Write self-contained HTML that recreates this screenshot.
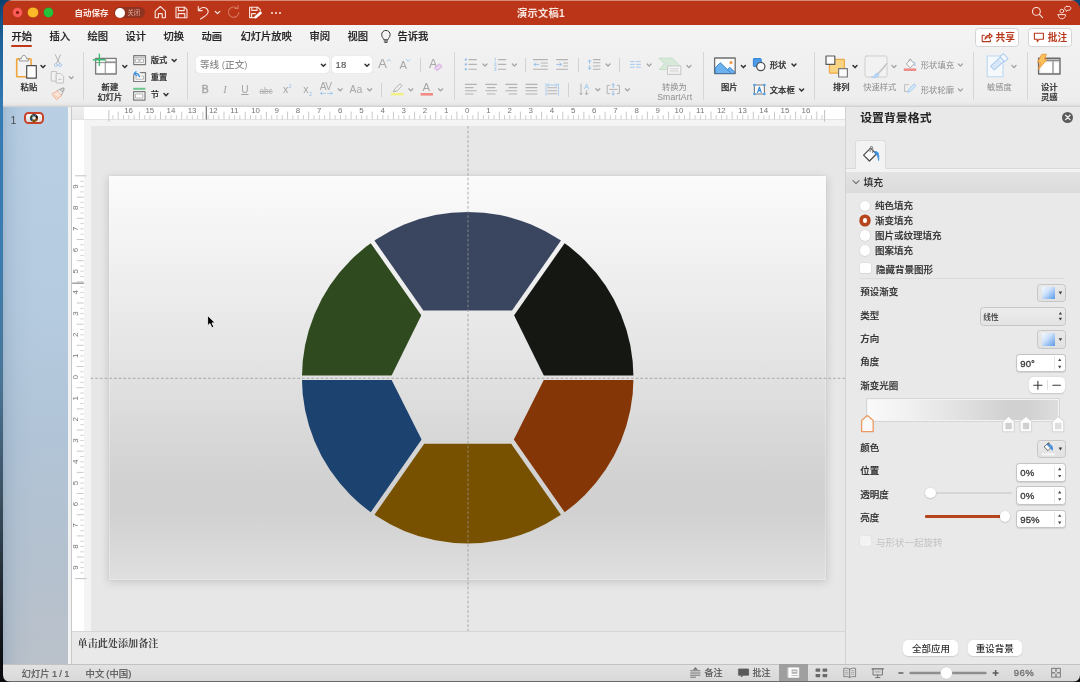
<!DOCTYPE html>
<html lang="zh-CN">
<head>
<meta charset="utf-8">
<title>演示文稿1</title>
<style>
html,body{margin:0;padding:0}
body{width:1080px;height:682px;overflow:hidden;position:relative;background:#05080c;
 font-family:"Liberation Sans","Noto Sans CJK SC",sans-serif;font-size:10px;color:#262626;
 -webkit-font-smoothing:antialiased}
*{box-sizing:border-box}
.a{position:absolute}
.t{position:absolute;white-space:nowrap;line-height:1}
svg{position:absolute;overflow:visible}
#desk{left:0;top:0;width:1080px;height:682px;
 background:linear-gradient(180deg,#0b4170 0px,#1f6299 40px,#347ab3 110px,#3b7cb0 250px,#4a7596 380px,#3b4f60 500px,#1c232b 600px,#05070a 682px)}
#deskr{left:1060px;top:0;width:20px;height:20px;background:#0c4474}
#deskb{left:0;top:660px;width:1080px;height:22px;background:#0a0c0f}
#win{will-change:transform;left:0;top:0;width:1080px;height:682px;clip-path:inset(0px 0px 0px 3px round 9px 9px 7px 7px);background:#e9e9e9}
/* title bar */
#tbar{left:0;top:0;width:1080px;height:25px;background:#bb3519;border-top:1px solid #d98c77}
#tabs{left:0;top:25px;width:1080px;height:81.8px;background:linear-gradient(180deg,#f4f4f4 0,#f1f1f1 24px,#eeeeee 70px,#ececec 77px,#e6e6e6 79.6px,#d3d3d3 81.4px,#d3d3d3 81.8px)}
.tab{font-size:10.3px;font-weight:500;color:#242424;top:32px;margin-left:-.1px;-webkit-text-stroke:.18px #242424}
.w{color:#fff}
.sep{position:absolute;width:1px;background:#d6d6d6;top:52px;height:48px}
.ssep{position:absolute;width:1px;background:#d2d2d2;height:14px}
.rl{font-size:8.3px;font-weight:500;color:#2a2a2a;-webkit-text-stroke:.18px #2a2a2a}
.rd{font-size:8.3px;color:#8d8d8d}
.pl{font-size:9.5px;color:#2e2e2e;font-weight:500;margin-top:.2px;-webkit-text-stroke:.15px #2e2e2e}
.inp{position:absolute;left:1015.6px;width:50px;height:18.6px;border-radius:3.5px;background:#fff;border:1px solid #c4c4c4;box-shadow:0 .5px 1px rgba(0,0,0,.10);margin-top:-.2px}
.inp i{position:absolute;left:37.4px;top:1.5px;width:1px;height:14px;background:#e6e6e6}
.iv{position:absolute;font-size:9.6px;color:#363636;line-height:1;left:1020.3px;margin-top:-.1px;-webkit-text-stroke:.3px #363636}
.gb{position:absolute;left:1036.8px;width:28.8px;height:18.6px;border-radius:3.5px;background:linear-gradient(180deg,#e9e9e9,#e1e1e1);border:1px solid #c6c6c6;margin-top:-.2px}
.rb{position:absolute;left:859.6px;width:10.4px;height:10.4px;border-radius:50%;background:#fff;box-shadow:0 0 0 .6px #d9d9d9,0 .6px 1px rgba(0,0,0,.12)}
.cb{position:absolute;left:860.4px;width:10.2px;height:10.2px;border-radius:2.6px;background:#fff;box-shadow:0 0 0 .6px #dedede,0 .6px 1px rgba(0,0,0,.10)}
</style>
</head>
<body>
<div id="desk" class="a"></div><div id="deskr" class="a"></div><div id="deskb" class="a"></div>
<div id="win" class="a">
<!-- ===== title bar ===== -->
<div id="tbar" class="a"></div>
<div class="a" style="left:12.7px;top:7.9px;width:9.5px;height:9.5px;border-radius:50%;background:#fc5b57;box-shadow:0 0 0 .4px #d94a3f"></div>
<div class="a" style="left:15.9px;top:11.1px;width:3.1px;height:3.1px;border-radius:50%;background:#7a1209"></div>
<div class="a" style="left:28.2px;top:7.9px;width:9.5px;height:9.5px;border-radius:50%;background:#fdb927;box-shadow:0 0 0 .4px #dc9a1c"></div>
<div class="a" style="left:43.7px;top:7.9px;width:9.5px;height:9.5px;border-radius:50%;background:#27c13b;box-shadow:0 0 0 .4px #1ea52f"></div>
<div class="t w" style="left:74.5px;top:9px;font-size:8.5px;font-weight:700;color:#fbe9e4">自动保存</div>
<div class="a" style="left:114px;top:7.3px;width:31px;height:11px;border-radius:6px;background:#8f3321"></div>
<div class="a" style="left:114.6px;top:7.6px;width:10.4px;height:10.4px;border-radius:50%;background:#fff"></div>
<div class="t" style="left:127.4px;top:9.9px;font-size:6.3px;color:#dcae9f">关闭</div>
<svg style="left:153px;top:4px" width="132" height="18" viewBox="153 4 132 18" fill="none" stroke="#fbe6e0" stroke-width="1.1" stroke-linecap="round" stroke-linejoin="round">
 <!-- home -->
 <path d="M155.2 11.2 L160.3 6.5 L165.4 11.2 V17.7 H162.2 V13.6 H158.4 V17.7 H155.2 Z"/>
 <!-- save -->
 <path d="M176 7.2 H184.6 L187 9.6 V17.8 H176 Z"/>
 <path d="M178.4 7.4 V10.6 H184.2 V7.4 M178.2 17.6 V13.6 H184.8 V17.6"/>
 <!-- undo -->
 <path d="M198.6 10.4 C200.6 7.4 205.2 6.2 207.4 9.4 C209 11.8 207.8 14 205.6 15.6 L200.6 19"/>
 <path d="M198.3 6.6 V10.6 H202.2" />
 <!-- chevron -->
 <path d="M215.2 11.4 L217.5 13.6 L219.8 11.4" stroke-width="1.3"/>
 <!-- redo (dim) -->
 <path d="M237.4 8.6 A5.2 5.2 0 1 0 238.8 12.6 M235 8.4 H238 V5.6" stroke="#d9765f"/>
 <!-- save as -->
 <path d="M255 17.6 H249.6 V7.2 H257.6 L260.2 9.6 V11"/>
 <path d="M251.8 7.4 V10.4 H257 V7.4 M251.6 17.4 V13.6 H255.4"/>
 <path d="M255.8 17 L260.4 13" stroke-width="2.7" stroke="#fff"/>
</svg>
<div class="a" style="left:270.8px;top:11.8px;width:2px;height:2px;background:#fbe6e0;border-radius:50%"></div>
<div class="a" style="left:274.9px;top:11.8px;width:2px;height:2px;background:#fbe6e0;border-radius:50%"></div>
<div class="a" style="left:279px;top:11.8px;width:2px;height:2px;background:#fbe6e0;border-radius:50%"></div>
<div class="t w" style="left:517px;top:8.6px;font-size:10.2px;font-weight:700;color:#f9e4de;letter-spacing:.3px">演示文稿1</div>
<svg style="left:1030px;top:4px" width="44" height="18" viewBox="1030 4 44 18" fill="none" stroke="#fbe6e0" stroke-width="1.1" stroke-linecap="round" stroke-linejoin="round">
 <circle cx="1036.4" cy="11.4" r="3.9"/>
 <path d="M1039.4 14.4 L1042.6 17.6"/>
 <!-- people -->
 <g stroke="#f8dcd4" stroke-width="1"><circle cx="1061.8" cy="11.1" r="1.9"/>
 <path d="M1058.2 14.6 H1065.6 C1065.6 17.4 1064 18.8 1061.9 18.8 C1059.8 18.8 1058.2 17.4 1058.2 14.6 Z"/>
 <path d="M1066.4 6.4 H1069 C1071.4 6.4 1071.4 10.2 1069 10.2 H1067.8 L1066.4 11.6 L1066.2 10.2 C1064 10 1064 6.4 1066.4 6.4 Z"/></g>
</svg>
<!-- ===== tabs + ribbon ===== -->
<div id="tabs" class="a"></div>
<div class="t tab" style="left:11.5px">开始</div>
<div class="a" style="left:11px;top:44.5px;width:21px;height:2.4px;border-radius:1.2px;background:#c2381b"></div>
<div class="t tab" style="left:49.5px">插入</div>
<div class="t tab" style="left:87.5px">绘图</div>
<div class="t tab" style="left:125.5px">设计</div>
<div class="t tab" style="left:163.5px">切换</div>
<div class="t tab" style="left:201.5px">动画</div>
<div class="t tab" style="left:240.5px">幻灯片放映</div>
<div class="t tab" style="left:309.5px">审阅</div>
<div class="t tab" style="left:347.5px">视图</div>
<svg style="left:380px;top:29px" width="12" height="16" viewBox="380 29 12 16" fill="none" stroke="#3a3a3a" stroke-width="1" stroke-linecap="round">
 <path d="M383.8 39.4 C383.4 38 381.7 37.2 381.7 34.6 A4.2 4.2 0 0 1 390.1 34.6 C390.1 37.2 388.4 38 388 39.4 Z"/>
 <path d="M384.2 41 H387.6 M384.8 42.4 H387"/>
</svg>
<div class="t tab" style="left:397.5px">告诉我</div>
<!-- share / comment buttons -->
<div class="a" style="left:975.3px;top:28.2px;width:44px;height:18.4px;border-radius:3.5px;background:#fff;border:1px solid #d4d4d4"></div>
<svg style="left:980px;top:31px" width="14" height="12" viewBox="980 31 14 12" fill="none" stroke="#b83a1d" stroke-width="1.1" stroke-linecap="round" stroke-linejoin="round">
 <path d="M984.4 35.2 H982.2 V41.6 H990.4 V39.8"/>
 <path d="M985 39.2 C985.4 36.6 987 35.4 989.4 35.4 V33.4 L992.2 36 L989.4 38.4 V36.8 C987.4 36.8 986 37.6 985 39.2 Z"/>
</svg>
<div class="t" style="left:995.6px;top:33.1px;font-size:9.7px;font-weight:700;color:#b83a1d">共享</div>
<div class="a" style="left:1027.6px;top:28.2px;width:44px;height:18.4px;border-radius:3.5px;background:#fff;border:1px solid #d4d4d4"></div>
<svg style="left:1033px;top:31px" width="14" height="13" viewBox="1033 31 14 13" fill="none" stroke="#b83a1d" stroke-width="1.1" stroke-linejoin="round">
 <path d="M1034.4 33.2 H1043.4 V39.2 H1039.2 L1037.2 41.6 V39.2 H1034.4 Z"/>
</svg>
<div class="t" style="left:1047.8px;top:33.1px;font-size:9.7px;font-weight:700;color:#b83a1d">批注</div>
<!-- ===== ribbon ===== -->
<div class="sep" style="left:83px"></div>
<div class="sep" style="left:187px"></div>
<div class="sep" style="left:453.5px"></div>
<div class="sep" style="left:702.5px"></div>
<div class="sep" style="left:814px"></div>
<div class="sep" style="left:973px"></div>
<div class="sep" style="left:1027px"></div>
<div class="ssep" style="left:420px;top:57.5px"></div>
<div class="ssep" style="left:381px;top:82.5px"></div>
<div class="ssep" style="left:525px;top:57.5px"></div>
<div class="ssep" style="left:578px;top:57.5px"></div>
<div class="ssep" style="left:619px;top:57.5px"></div>
<div class="ssep" style="left:567.5px;top:82.5px"></div>
<!-- font boxes -->
<div class="a" style="left:196px;top:56.4px;width:133px;height:16.8px;border-radius:3.5px;background:#fff;box-shadow:0 0 1px rgba(0,0,0,.18)"></div>
<div class="a" style="left:331.7px;top:56.4px;width:40.6px;height:16.8px;border-radius:3.5px;background:#fff;box-shadow:0 0 1px rgba(0,0,0,.18)"></div>
<div class="t" style="left:200px;top:59.9px;font-size:9.6px;color:#8a8a8a;font-weight:500">等线 (正文)</div>
<div class="t" style="left:335.6px;top:60.2px;font-size:9.5px;color:#5c5c5c;-webkit-text-stroke:.2px #5c5c5c">18</div>
<!-- labels -->
<div class="t rl" style="left:20.6px;top:82.8px">粘贴</div>
<div class="t rl" style="left:101.6px;top:83.1px">新建</div>
<div class="t rl" style="left:97.4px;top:92.7px">幻灯片</div>
<div class="t rl" style="left:150.8px;top:56.3px">版式</div>
<div class="t rl" style="left:150.8px;top:73px">重置</div>
<div class="t rl" style="left:150.8px;top:90.2px">节</div>
<div class="t rd" style="left:662px;top:82.8px">转换为</div>
<div class="t rd" style="left:657.2px;top:93px;font-size:8.6px;letter-spacing:.15px">SmartArt</div>
<div class="t rl" style="left:721px;top:82.8px">图片</div>
<div class="t rl" style="left:769.8px;top:60.6px">形状</div>
<div class="t rl" style="left:769.8px;top:85.6px">文本框</div>
<div class="t rl" style="left:833px;top:82.8px">排列</div>
<div class="t rd" style="left:863.2px;top:82.8px">快速样式</div>
<div class="t rd" style="left:920.8px;top:60.6px">形状填充</div>
<div class="t rd" style="left:920.8px;top:85.6px">形状轮廓</div>
<div class="t rd" style="left:987px;top:82.8px">敏感度</div>
<div class="t rl" style="left:1041px;top:82.8px">设计</div>
<div class="t rl" style="left:1041px;top:92.7px">灵感</div>
<!-- B I U etc -->
<div class="t" style="left:201.8px;top:84.9px;font-size:10.4px;color:#a6a6a6;-webkit-text-stroke:.45px #a6a6a6">B</div>
<div class="t" style="left:223.2px;top:84.9px;font-size:10.4px;color:#a3a3a3;font-style:italic;font-family:'Liberation Serif',serif">I</div>
<div class="t" style="left:241.2px;top:84.9px;font-size:10.2px;color:#a3a3a3;text-decoration:underline;text-underline-offset:1.2px">U</div>
<div class="t" style="left:259.4px;top:87.8px;font-size:8.2px;color:#adadad;text-decoration:line-through">abc</div>
<div class="t" style="left:283px;top:84.2px;font-size:10.6px;color:#a3a3a3">x</div>
<div class="t" style="left:288.6px;top:83.6px;font-size:5.6px;color:#9cc3e8">2</div>
<div class="t" style="left:303.2px;top:84.2px;font-size:10.6px;color:#a3a3a3">x</div>
<div class="t" style="left:309px;top:92px;font-size:5.6px;color:#9cc3e8">2</div>
<div class="t" style="left:319.8px;top:82.4px;font-size:10.2px;color:#a8a8a8;letter-spacing:-.5px">AV</div>
<div class="t" style="left:349.4px;top:85.4px;font-size:10.4px;color:#a8a8a8;letter-spacing:.2px">Aa</div>
<div class="t" style="left:378px;top:57.4px;font-size:13.4px;color:#a6a6a6">A</div>
<div class="t" style="left:399.4px;top:59.8px;font-size:11.2px;color:#a6a6a6">A</div>
<div class="t" style="left:429px;top:57.6px;font-size:12.6px;color:#a6a6a6">A</div>
<div class="t" style="left:422.6px;top:82.4px;font-size:11.4px;color:#a6a6a6">A</div>
<svg style="left:0;top:0" width="1080" height="110" viewBox="0 0 1080 110" fill="none" stroke-linecap="round" stroke-linejoin="round">
<defs>
 <path id="chv" d="M-2 -1 L0 1.1 L2 -1" fill="none"/>
</defs>
<!-- chevrons dark -->
<g stroke="#333" stroke-width="1.5">
 <use href="#chv" x="43" y="66.5"/><use href="#chv" x="124.8" y="66.5"/><use href="#chv" x="174.2" y="60.5"/><use href="#chv" x="166" y="94.6"/>
 <use href="#chv" x="323.4" y="65.2"/><use href="#chv" x="367" y="65.2"/>
 <use href="#chv" x="743.4" y="66.5"/><use href="#chv" x="794" y="65"/><use href="#chv" x="801.6" y="90"/><use href="#chv" x="855" y="66.5"/>
</g>
<!-- chevrons grey -->
<g stroke="#a0a0a0" stroke-width="1.25">
 <use href="#chv" x="71.2" y="77.6"/><use href="#chv" x="340.2" y="89.8"/><use href="#chv" x="369.6" y="89.8"/><use href="#chv" x="410.8" y="89.8"/><use href="#chv" x="440.6" y="89.8"/>
 <use href="#chv" x="485" y="65"/><use href="#chv" x="514.4" y="65"/><use href="#chv" x="608" y="65"/><use href="#chv" x="649.2" y="65"/><use href="#chv" x="689" y="66.5"/>
 <use href="#chv" x="597.8" y="89.8"/><use href="#chv" x="627.4" y="89.8"/>
 <use href="#chv" x="894" y="66.5"/><use href="#chv" x="960.4" y="65"/><use href="#chv" x="960.4" y="90"/><use href="#chv" x="1014" y="66.5"/>
</g>
<!-- paste -->
<rect x="16.7" y="58.9" width="14.4" height="17.8" rx=".8" fill="#f3f3f3" stroke="#f0a53a" stroke-width="1.6"/>
<path d="M19.4 60.6 V58.8 H21.4 C21.4 56.4 22.6 55.4 23.9 55.4 C25.2 55.4 26.4 56.4 26.4 58.8 H28.4 V60.6 Z" fill="#f7f7f7" stroke="#9a9a9a" stroke-width="1"/>
<rect x="26.7" y="65.6" width="9.6" height="12.6" fill="#fff" stroke="#4e4e4e" stroke-width="1.2"/>
<!-- scissors -->
<g stroke="#b4b4b4" stroke-width="1">
 <path d="M55.4 54.8 L59.6 63.6 M60.6 54.8 L56.4 63.6"/>
</g>
<circle cx="55.9" cy="65" r="1.5" stroke="#a9c9ea" stroke-width="1"/>
<circle cx="60.1" cy="65" r="1.5" stroke="#a9c9ea" stroke-width="1"/>
<!-- copy -->
<g stroke="#c2c2c2" stroke-width="1" fill="#f1f1f1">
 <path d="M51.6 71.6 H56.6 V81 H51.6 Z"/>
 <path d="M56.4 73.6 H60.8 L63.6 76.4 V83 H56.4 Z"/>
 <path d="M58.8 79.4 H61.2" />
</g>
<!-- format painter -->
<g stroke-width="1">
 <path d="M52.3 94 L57.4 90.8 L61.6 95.6 L56.8 99.4 Z" stroke="#f2b08c" fill="#fbe3d6"/>
 <path d="M54.6 95.6 L58.6 98" stroke="#f5c3a8" stroke-width=".8"/>
 <path d="M57.6 90.6 L59.8 89 L62.8 92.6 L61.4 95.2" stroke="#a9a9a9" fill="#ececec"/>
 <path d="M60.4 89.6 L62.4 88.2 C63.4 87.6 64.6 88.8 63.8 89.8 L62.6 91.6" stroke="#a9a9a9" stroke-width="1.3" fill="#e4e4e4"/>
</g>
<!-- new slide -->
<rect x="95.6" y="58.4" width="20.6" height="15.6" fill="#f6f6f6" stroke="#7b7b7b" stroke-width="1.3"/>
<path d="M105.6 59 V62 H115.6" stroke="#a9a9a9" stroke-width="1.4" fill="none"/>
<path d="M96.4 62.6 H115.6 M105.2 62.6 V73.4" stroke="#8d8d8d" stroke-width="1"/>
<rect x="97.4" y="63.8" width="6.8" height="8.6" fill="#fff" stroke="none"/>
<rect x="106.4" y="63.8" width="8.4" height="8.6" fill="#fff" stroke="none"/>
<path d="M93.4 59.8 H105 M99.4 54.2 V65.4" stroke="#3cbc70" stroke-width="1.4"/>
<!-- layout -->
<rect x="133.7" y="55.6" width="11.8" height="9" fill="#f7f7f7" stroke="#7d7d7d" stroke-width="1.2"/>
<path d="M134.4 57.2 H144.8" stroke="#a8a8a8" stroke-width="1"/>
<rect x="135.7" y="59" width="3.2" height="3.4" fill="#fff" stroke="#a2a2a2" stroke-width=".8"/>
<rect x="140.3" y="59" width="3.2" height="3.4" fill="#fff" stroke="#a2a2a2" stroke-width=".8"/>
<!-- reset -->
<rect x="133.7" y="72.7" width="11.8" height="8.8" fill="#f7f7f7" stroke="#7d7d7d" stroke-width="1.2"/>
<rect x="136.4" y="76" width="7.2" height="3.2" fill="#fff" stroke="#a5a5a5" stroke-width=".8"/>
<path d="M133.6 72.6 C136 71.8 139.6 73 139.8 76.6" stroke="#f1f1f1" stroke-width="3.6"/>
<path d="M135.2 73.6 C137.2 73 139 74.2 139.4 76.6" stroke="#3a8fdc" stroke-width="1.4"/>
<path d="M136 71.6 L134 73.6 L136.4 75.4" stroke="#3a8fdc" stroke-width="1.3"/>
<!-- section -->
<rect x="133.2" y="87.8" width="12.2" height="2" fill="#6cc78d" stroke="none"/>
<rect x="133.6" y="91.6" width="11.4" height="8.6" fill="#f7f7f7" stroke="#7d7d7d" stroke-width="1.2"/>
<rect x="135.8" y="94" width="7" height="4" fill="#fff" stroke="#a5a5a5" stroke-width=".8"/>
<!-- A^ Av carets -->
<path d="M387.2 61 L388.8 59.4 L390.4 61" stroke="#9cc7ee" stroke-width="1"/>
<path d="M406.6 59.6 L408.2 61.2 L409.8 59.6" stroke="#9cc7ee" stroke-width="1"/>
<!-- eraser -->
<path d="M434.8 67.8 L439.4 63.8 L442 66.6 L437.6 70.4 Z" fill="#ead3f0" stroke="#d6a6e2" stroke-width="1"/>
<!-- AV arrows -->
<path d="M320.4 93.4 H325.4 M327.6 93.4 H332.4 M321.8 92.2 L320.4 93.4 L321.8 94.6 M331 92.2 L332.4 93.4 L331 94.6" stroke="#9cc7ee" stroke-width=".9"/>
<!-- highlighter -->
<path d="M393.4 91.6 L395.2 88.6 L400 83.8 L402 85.6 L397.4 90.6 Z" stroke="#b0b0b0" stroke-width="1" fill="#f3f3f3"/>
<rect x="391" y="92.9" width="12.6" height="2.6" fill="#f2ee8a" stroke="none"/>
<!-- font color bar -->
<rect x="420.6" y="93" width="12.4" height="2.6" fill="#f08b85" stroke="none"/>
<!-- bullets -->
<g stroke="#b3b3b3" stroke-width="1.1">
 <path d="M469 59.6 H476.4 M469 64.4 H476.4 M469 69.2 H476.4"/>
 <path d="M498.4 59.6 H505.8 M498.4 64.4 H505.8 M498.4 69.2 H505.8"/>
</g>
<g fill="#8fbce8" stroke="none">
 <rect x="464.8" y="58.6" width="2" height="2"/><rect x="464.8" y="63.4" width="2" height="2"/><rect x="464.8" y="68.2" width="2" height="2"/>
</g>
<g stroke="#a7cbee" stroke-width=".8">
 <path d="M494.6 58.8 L495.6 58.2 V61 M494.4 63 H496.2 L494.4 65.6 H496.4 M494.4 67.8 H496.2 L495.2 69 L496.2 70.2 H494.4"/>
</g>
<!-- outdent / indent -->
<g stroke="#b3b3b3" stroke-width="1.1">
 <path d="M533.4 59.6 H547.4 M541.2 63 H547.4 M541.2 66 H547.4 M533.4 69.2 H547.4"/>
 <path d="M556.6 59.6 H567.6 M563.6 63 H567.6 M563.6 66 H567.6 M556.6 69.2 H567.6"/>
</g>
<g stroke="#8fbce8" stroke-width=".9">
 <path d="M538.8 64.4 H534.2 M535.8 62.8 L534.2 64.4 L535.8 66"/>
 <path d="M556.8 64.4 H561.4 M559.8 62.8 L561.4 64.4 L559.8 66"/>
</g>
<!-- line spacing -->
<g stroke="#b3b3b3" stroke-width="1.1">
 <path d="M593.4 59.6 H600 M593.4 62.8 H600 M593.4 66 H600 M593.4 69.2 H600"/>
</g>
<g stroke="#8fbce8" stroke-width=".9">
 <path d="M589.6 60 V63.4 M588.2 61.4 L589.6 60 L591 61.4 M589.6 65.6 V69.2 M588.2 67.8 L589.6 69.2 L591 67.8"/>
</g>
<!-- columns -->
<g stroke="#a9cbee" stroke-width="1">
 <path d="M630.4 61.6 H634.4 M636.4 61.6 H640.4 M630.4 64.4 H634.4 M636.4 64.4 H640.4 M630.4 67.2 H634.4 M636.4 67.2 H640.4"/>
</g>
<!-- align row -->
<g stroke="#b3b3b3" stroke-width="1.1">
 <path d="M465.4 84.4 H476.4 M465.4 87.6 H473.2 M465.4 90.8 H476.4 M465.4 94 H473.2"/>
 <path d="M485.8 84.4 H496.6 M487.4 87.6 H495 M485.8 90.8 H496.6 M487.4 94 H495"/>
 <path d="M505.8 84.4 H516.8 M509 87.6 H516.8 M505.8 90.8 H516.8 M509 94 H516.8"/>
 <path d="M526 84.4 H537 M526 87.6 H537 M526 90.8 H537 M526 94 H537"/>
 <path d="M547.8 87.8 H556.6 M547.8 90.8 H556.6 M547.8 93.8 H556.6"/>
</g>
<g stroke="#a4c9ee" stroke-width=".9">
 <path d="M546 83.6 V95.4 M558.4 83.6 V95.4 M547.4 85 H557 M548.6 83.9 L547.4 85 L548.6 86.1 M555.8 83.9 L557 85 L555.8 86.1"/>
</g>
<!-- text direction -->
<g stroke="#b3b3b3" stroke-width="1">
 <path d="M581 84 V94.6 M579.6 93.2 L581 94.8 L582.4 93.2 M586.6 90.6 V94.6 M585.2 93.2 L586.6 94.8 L588 93.2"/>
</g>
<path d="M584.6 88.8 L586.6 84 L588.6 88.8 M585.4 87.2 H587.8" stroke="#a4c9ee" stroke-width=".9"/>
<!-- align text -->
<g stroke="#b3b3b3" stroke-width="1">
 <path d="M609.4 85.4 H607.2 V93.6 H609.4 M617.2 85.4 H619.4 V93.6 H617.2 M609.6 89.4 H617"/>
</g>
<path d="M613.2 83.8 V87.6 M613.2 91.2 V95 M612 85 L613.2 83.8 L614.4 85 M612 93.8 L613.2 95 L614.4 93.8" stroke="#8fbce8" stroke-width=".9"/>
<!-- smartart -->
<path d="M659.2 58.2 H672.4 L679.6 65.8 L676 69.6 H659.2 L664.4 63.9 Z" fill="#d7ead9" stroke="#c4dfc8" stroke-width="1"/>
<rect x="667.6" y="66" width="13.2" height="8.4" fill="#f7f7f7" stroke="#c9c9c9" stroke-width="1.1"/>
<path d="M670 68.6 H678.4 M670 70.2 H678.4 M670 71.8 H678.4" stroke="#d0d0d0" stroke-width=".8"/>
<!-- picture -->
<rect x="714.6" y="58" width="20.6" height="15.6" fill="#fbfbfb" stroke="#6f6f6f" stroke-width="1.3"/>
<path d="M715.4 72.8 V67.6 L720.4 62.8 L727.4 69.6 L729.8 67.4 L734.4 71.6 V72.8 Z" fill="#6cb2ee" stroke="#2f7fd0" stroke-width=".9"/>
<path d="M727.4 69.6 L730.6 72.8" stroke="#2f7fd0" stroke-width=".9"/>
<circle cx="731" cy="62.4" r="1.5" fill="#f7943c" stroke="none"/>
<!-- shapes -->
<rect x="753.4" y="58.6" width="7.8" height="8" rx=".8" fill="#4b9be8" stroke="#2f7fd0" stroke-width="1"/>
<circle cx="760.8" cy="66.6" r="4.1" fill="#fbfbfb" stroke="#4a4a4a" stroke-width="1.2"/>
<!-- text box -->
<rect x="754.4" y="85" width="10" height="9" fill="#fbfbfb" stroke="#7a7a7a" stroke-width="1.1"/>
<path d="M757.6 92.4 L759.4 87 L761.2 92.4 M758.2 90.6 H760.6" stroke="#2f86de" stroke-width="1.1"/>
<g fill="#4fa2ec" stroke="none"><circle cx="754.4" cy="85" r="1.3"/><circle cx="764.4" cy="85" r="1.3"/><circle cx="754.4" cy="94" r="1.3"/><circle cx="764.4" cy="94" r="1.3"/></g>
<!-- arrange -->
<rect x="829.4" y="59.4" width="15" height="13.8" rx=".8" fill="#f9d483" stroke="#f0a848" stroke-width="1.2"/>
<rect x="826" y="56" width="8.8" height="8.4" fill="#fbfbfb" stroke="#5a5a5a" stroke-width="1.2"/>
<rect x="838.6" y="68.6" width="8.8" height="8.4" fill="#fbfbfb" stroke="#7a7a7a" stroke-width="1.2"/>
<!-- quick styles -->
<rect x="865" y="56" width="22" height="21" rx="1.6" fill="#f2f2f2" stroke="#cfcfcf" stroke-width="1"/>
<path d="M886.6 64 L877 75" stroke="#efefef" stroke-width="3.4"/>
<path d="M887 63.6 L877.8 74" stroke="#c6c6c6" stroke-width="1.6"/>
<path d="M871.6 77.2 C874.6 76.8 874.6 73.6 877 73 C878.6 73.6 879.2 75 878.2 76.4 C876.8 78 873.8 78.2 871.6 77.2 Z" fill="#b7d5f2" stroke="#a9cbee" stroke-width=".7"/>
<!-- shape fill -->
<path d="M906.6 63.6 L910.4 59.6 L914.4 63.6 L910.4 67.6 Z" fill="#f7f7f7" stroke="#ababab" stroke-width="1"/>
<path d="M908.8 61 C909.2 58.4 911 58 911.2 60.4" stroke="#ababab" stroke-width=".9"/>
<path d="M914 62 C915 63 915.2 64.4 914.8 65.6" stroke="#8fbce8" stroke-width="1"/>
<rect x="903.8" y="68.4" width="12.4" height="2.6" fill="#f18d88" stroke="none"/>
<!-- shape outline -->
<path d="M908.4 84.6 H904.6 V91.6 H908" stroke="#bdbdbd" stroke-width="1"/>
<path d="M908 92 L908.8 89.2 L914 83.8 L916 85.6 L910.8 91 Z" fill="#d4e6f7" stroke="#a4c9ee" stroke-width=".9"/>
<!-- sensitivity -->
<rect x="987.2" y="56" width="15.8" height="20.8" fill="#f6f9fc" stroke="#bcd7f2" stroke-width="1.1"/>
<g transform="rotate(-42 998 63)">
 <rect x="990.4" y="60.4" width="13.4" height="5.2" fill="#eaf2fb" stroke="#a9cbee" stroke-width="1"/>
 <rect x="1003.8" y="59.6" width="4.6" height="6.8" fill="#f3f7fc" stroke="#a9cbee" stroke-width="1"/>
 <path d="M992 61.6 V64.4 M994 61.6 V64.4 M996 61.6 V64.4 M998 61.6 V64.4 M1000 61.6 V64.4" stroke="#a9cbee" stroke-width=".7"/>
</g>
<!-- design ideas -->
<rect x="1038.6" y="58.2" width="21.4" height="15.8" fill="#f4f4f4" stroke="#6b6b6b" stroke-width="1.4"/>
<path d="M1039.4 60.4 H1059.4" stroke="#8a8a8a" stroke-width="1.6"/>
<path d="M1053 61.6 V73.4" stroke="#777" stroke-width="1"/>
<rect x="1041.4" y="62.8" width="10.4" height="9.2" fill="#fff" stroke="none"/>
<rect x="1054.2" y="62.8" width="4.4" height="9.2" fill="#fff" stroke="none"/>
<path d="M1042 54.4 L1046.4 54.2 L1044.4 59.2 L1047.2 59.2 L1038.4 69.4 L1040.6 62.6 L1037.8 62.6 Z" fill="#f9c35a" stroke="#f2933a" stroke-width=".9"/>
</svg>
<!-- ===== workspace ===== -->
<div class="a" style="left:0;top:106.6px;width:68px;height:557.4px;background:linear-gradient(90deg,rgba(100,128,155,.36) 0,rgba(120,148,176,.22) 8px,rgba(140,165,190,.10) 18px,rgba(255,255,255,0) 34px),linear-gradient(180deg,#b8cfe4 0,#b5cbdf 200px,#b1c4d7 330px,#b4c1cf 450px,#bac1ca 558px)"></div>
<div class="a" style="left:68px;top:106.6px;width:3.4px;height:557.4px;background:#f2f2f2"></div>
<div class="a" style="left:71.2px;top:106.6px;width:1px;height:557.4px;background:#c9c9c9"></div>
<div class="t" style="left:10.6px;top:114.8px;font-size:10.6px;color:#4d4d4d">1</div>
<div class="a" style="left:24.4px;top:111.6px;width:19.2px;height:12.8px;border-radius:4.5px;border:2.2px solid #c8432a;background:linear-gradient(180deg,#fbfbfb,#dcdcdc)"></div>
<svg style="left:24px;top:111px" width="20" height="14" viewBox="24 111 20 14"><g transform="translate(34 118)"><path d="M0 0L4.10 -0.00A4.1 4.1 0 0 0 2.35 -3.36Z" fill="#151713"/><path d="M0 0L2.35 -3.36A4.1 4.1 0 0 0 -2.35 -3.36Z" fill="#3a4660"/><path d="M0 0L-2.35 -3.36A4.1 4.1 0 0 0 -4.10 -0.00Z" fill="#2e4a1e"/><path d="M0 0L-4.10 -0.00A4.1 4.1 0 0 0 -2.35 3.36Z" fill="#1c4270"/><path d="M0 0L-2.35 3.36A4.1 4.1 0 0 0 2.35 3.36Z" fill="#785100"/><path d="M0 0L2.35 3.36A4.1 4.1 0 0 0 4.10 0.00Z" fill="#853607"/><polygon points="1.9,0 1.1,-1.6 -1.1,-1.6 -1.9,0 -1.1,1.6 1.1,1.6" fill="#ececec"/></g></svg>
<div class="a" style="left:72.2px;top:106.6px;width:773px;height:524.4px;background:#f4f4f4"></div>
<div class="a" style="left:90.5px;top:126px;width:755px;height:505px;background:#e7e7e7"></div>
<div class="a" style="left:72.2px;top:106.8px;width:11.6px;height:12.8px;background:linear-gradient(180deg,#f0f0f0,#e6e6e6)"></div>
<div class="a" style="left:83.8px;top:106.8px;width:761.4px;height:12.8px;background:#fff"></div>
<div class="a" style="left:72.2px;top:119.6px;width:11.4px;height:511px;background:#fff"></div>
<div class="a" style="left:72.2px;top:119.4px;width:773px;height:.8px;background:#e3e3e3"></div>
<div class="a" style="left:109.2px;top:176.2px;width:717.2px;height:403.4px;background:linear-gradient(180deg,#fbfbfb 0%,#f1f1f1 20%,#e4e4e4 45%,#d2d2d2 74%,#d1d1d1 83%,#dfdfdf 100%);box-shadow:0 1.5px 9px 1px rgba(0,0,0,.13),0 0 2px rgba(0,0,0,.08),inset 0 0 0 1px rgba(255,255,255,.28)"></div>
<svg style="left:0;top:0" width="1080" height="682" viewBox="0 0 1080 682">
<defs><mask id="dm" maskUnits="userSpaceOnUse" x="290" y="200" width="356" height="356"><circle cx="467.7" cy="377.7" r="165.8" fill="#fff"/><polygon points="544.9,377.7 511.7,310.5 423.7,310.5 390.5,377.7 423.7,443.8 511.7,443.8" fill="#000"/><line x1="667.7" y1="377.7" x2="267.7" y2="377.7" stroke="#000" stroke-width="4.5"/><line x1="582.4" y1="213.9" x2="353.0" y2="541.5" stroke="#000" stroke-width="4.5"/><line x1="353.0" y1="213.9" x2="582.4" y2="541.5" stroke="#000" stroke-width="4.5"/></mask></defs>
<g mask="url(#dm)"><polygon points="467.7,377.7 667.7,377.7 698.3,257.6 582.4,213.9" fill="#151713"/><polygon points="467.7,377.7 582.4,213.9 467.7,117.7 353.0,213.9" fill="#3a4660"/><polygon points="467.7,377.7 353.0,213.9 237.1,257.6 267.7,377.7" fill="#2e4a1e"/><polygon points="467.7,377.7 267.7,377.7 237.1,497.8 353.0,541.5" fill="#1c4270"/><polygon points="467.7,377.7 353.0,541.5 467.7,637.7 582.4,541.5" fill="#785100"/><polygon points="467.7,377.7 582.4,541.5 698.3,497.8 667.7,377.7" fill="#853607"/></g>
<path d="M468 126 V631" stroke="rgba(150,150,150,.75)" stroke-width="1" stroke-dasharray="2.7 2" fill="none"/><path d="M90.5 378.3 H845" stroke="rgba(150,150,150,.75)" stroke-width="1" stroke-dasharray="2.7 2" fill="none"/>
<path d="M112.9 115.2V119.4M123.5 115.2V119.4M128.8 115.2V119.4M134.1 115.2V119.4M144.7 115.2V119.4M149.9 115.2V119.4M155.2 115.2V119.4M165.8 115.2V119.4M171.1 115.2V119.4M176.4 115.2V119.4M187.0 115.2V119.4M192.3 115.2V119.4M197.6 115.2V119.4M208.2 115.2V119.4M213.5 115.2V119.4M218.8 115.2V119.4M229.3 115.2V119.4M234.6 115.2V119.4M239.9 115.2V119.4M250.5 115.2V119.4M255.8 115.2V119.4M261.1 115.2V119.4M271.7 115.2V119.4M277.0 115.2V119.4M282.3 115.2V119.4M292.8 115.2V119.4M298.1 115.2V119.4M303.4 115.2V119.4M314.0 115.2V119.4M319.3 115.2V119.4M324.6 115.2V119.4M335.2 115.2V119.4M340.5 115.2V119.4M345.8 115.2V119.4M356.4 115.2V119.4M361.6 115.2V119.4M366.9 115.2V119.4M377.5 115.2V119.4M382.8 115.2V119.4M388.1 115.2V119.4M398.7 115.2V119.4M404.0 115.2V119.4M409.3 115.2V119.4M419.9 115.2V119.4M425.2 115.2V119.4M430.5 115.2V119.4M441.0 115.2V119.4M446.3 115.2V119.4M451.6 115.2V119.4M462.2 115.2V119.4M467.5 115.2V119.4M472.8 115.2V119.4M483.4 115.2V119.4M488.7 115.2V119.4M494.0 115.2V119.4M504.5 115.2V119.4M509.8 115.2V119.4M515.1 115.2V119.4M525.7 115.2V119.4M531.0 115.2V119.4M536.3 115.2V119.4M546.9 115.2V119.4M552.2 115.2V119.4M557.5 115.2V119.4M568.1 115.2V119.4M573.4 115.2V119.4M578.6 115.2V119.4M589.2 115.2V119.4M594.5 115.2V119.4M599.8 115.2V119.4M610.4 115.2V119.4M615.7 115.2V119.4M621.0 115.2V119.4M631.6 115.2V119.4M636.9 115.2V119.4M642.2 115.2V119.4M652.7 115.2V119.4M658.0 115.2V119.4M663.3 115.2V119.4M673.9 115.2V119.4M679.2 115.2V119.4M684.5 115.2V119.4M695.1 115.2V119.4M700.4 115.2V119.4M705.7 115.2V119.4M716.2 115.2V119.4M721.5 115.2V119.4M726.8 115.2V119.4M737.4 115.2V119.4M742.7 115.2V119.4M748.0 115.2V119.4M758.6 115.2V119.4M763.9 115.2V119.4M769.2 115.2V119.4M779.8 115.2V119.4M785.0 115.2V119.4M790.3 115.2V119.4M800.9 115.2V119.4M806.2 115.2V119.4M811.5 115.2V119.4M822.1 115.2V119.4" stroke="#cecece" stroke-width="1" fill="none"/><path d="M118.2 111.6V119.4M139.4 111.6V119.4M160.5 111.6V119.4M181.7 111.6V119.4M202.9 111.6V119.4M224.0 111.6V119.4M245.2 111.6V119.4M266.4 111.6V119.4M287.6 111.6V119.4M308.7 111.6V119.4M329.9 111.6V119.4M351.1 111.6V119.4M372.2 111.6V119.4M393.4 111.6V119.4M414.6 111.6V119.4M435.7 111.6V119.4M456.9 111.6V119.4M478.1 111.6V119.4M499.3 111.6V119.4M520.4 111.6V119.4M541.6 111.6V119.4M562.8 111.6V119.4M583.9 111.6V119.4M605.1 111.6V119.4M626.3 111.6V119.4M647.4 111.6V119.4M668.6 111.6V119.4M689.8 111.6V119.4M711.0 111.6V119.4M732.1 111.6V119.4M753.3 111.6V119.4M774.5 111.6V119.4M795.6 111.6V119.4M816.8 111.6V119.4" stroke="#c9c9c9" stroke-width="1" fill="none"/><path d="M108.9 110V121.6M824.6 110V121.6" stroke="#c2c2c2" stroke-width="1" fill="none"/>
<g font-family="Liberation Sans, sans-serif" font-size="7.9" fill="#747474" text-anchor="middle"><text x="128.6" y="113.3">16</text><text x="149.8" y="113.3">15</text><text x="170.9" y="113.3">14</text><text x="192.1" y="113.3">13</text><text x="213.3" y="113.3">12</text><text x="234.4" y="113.3">11</text><text x="255.6" y="113.3">10</text><text x="276.8" y="113.3">9</text><text x="297.9" y="113.3">8</text><text x="319.1" y="113.3">7</text><text x="340.3" y="113.3">6</text><text x="361.4" y="113.3">5</text><text x="382.6" y="113.3">4</text><text x="403.8" y="113.3">3</text><text x="425.0" y="113.3">2</text><text x="446.1" y="113.3">1</text><text x="467.3" y="113.3">0</text><text x="488.5" y="113.3">1</text><text x="509.6" y="113.3">2</text><text x="530.8" y="113.3">3</text><text x="552.0" y="113.3">4</text><text x="573.1" y="113.3">5</text><text x="594.3" y="113.3">6</text><text x="615.5" y="113.3">7</text><text x="636.7" y="113.3">8</text><text x="657.8" y="113.3">9</text><text x="679.0" y="113.3">10</text><text x="700.2" y="113.3">11</text><text x="721.3" y="113.3">12</text><text x="742.5" y="113.3">13</text><text x="763.7" y="113.3">14</text><text x="784.9" y="113.3">15</text><text x="806.0" y="113.3">16</text></g>
<path d="M80.4 181.3H83.6M80.4 186.6H83.6M80.4 191.9H83.6M80.4 202.4H83.6M80.4 207.7H83.6M80.4 213.0H83.6M80.4 223.6H83.6M80.4 228.9H83.6M80.4 234.2H83.6M80.4 244.8H83.6M80.4 250.1H83.6M80.4 255.4H83.6M80.4 266.0H83.6M80.4 271.2H83.6M80.4 276.5H83.6M80.4 287.1H83.6M80.4 292.4H83.6M80.4 297.7H83.6M80.4 308.3H83.6M80.4 313.6H83.6M80.4 318.9H83.6M80.4 329.5H83.6M80.4 334.8H83.6M80.4 340.1H83.6M80.4 350.6H83.6M80.4 355.9H83.6M80.4 361.2H83.6M80.4 371.8H83.6M80.4 377.1H83.6M80.4 382.4H83.6M80.4 393.0H83.6M80.4 398.3H83.6M80.4 403.6H83.6M80.4 414.1H83.6M80.4 419.4H83.6M80.4 424.7H83.6M80.4 435.3H83.6M80.4 440.6H83.6M80.4 445.9H83.6M80.4 456.5H83.6M80.4 461.8H83.6M80.4 467.1H83.6M80.4 477.7H83.6M80.4 483.0H83.6M80.4 488.2H83.6M80.4 498.8H83.6M80.4 504.1H83.6M80.4 509.4H83.6M80.4 520.0H83.6M80.4 525.3H83.6M80.4 530.6H83.6M80.4 541.2H83.6M80.4 546.5H83.6M80.4 551.8H83.6M80.4 562.3H83.6M80.4 567.6H83.6M80.4 572.9H83.6" stroke="#cecece" stroke-width="1" fill="none"/><path d="M76.8 197.2H83.6M76.8 218.3H83.6M76.8 239.5H83.6M76.8 260.7H83.6M76.8 281.8H83.6M76.8 303.0H83.6M76.8 324.2H83.6M76.8 345.3H83.6M76.8 366.5H83.6M76.8 387.7H83.6M76.8 408.9H83.6M76.8 430.0H83.6M76.8 451.2H83.6M76.8 472.4H83.6M76.8 493.5H83.6M76.8 514.7H83.6M76.8 535.9H83.6M76.8 557.0H83.6" stroke="#c9c9c9" stroke-width="1" fill="none"/><path d="M75 175.8H86.4M75 578.6H86.4" stroke="#c2c2c2" stroke-width="1" fill="none"/>
<g font-family="Liberation Sans, sans-serif" font-size="7.9" fill="#747474" text-anchor="middle"><text transform="translate(78.4 186.6) rotate(-90)">9</text><text transform="translate(78.4 207.7) rotate(-90)">8</text><text transform="translate(78.4 228.9) rotate(-90)">7</text><text transform="translate(78.4 250.1) rotate(-90)">6</text><text transform="translate(78.4 271.2) rotate(-90)">5</text><text transform="translate(78.4 292.4) rotate(-90)">4</text><text transform="translate(78.4 313.6) rotate(-90)">3</text><text transform="translate(78.4 334.8) rotate(-90)">2</text><text transform="translate(78.4 355.9) rotate(-90)">1</text><text transform="translate(78.4 377.1) rotate(-90)">0</text><text transform="translate(78.4 398.3) rotate(-90)">1</text><text transform="translate(78.4 419.4) rotate(-90)">2</text><text transform="translate(78.4 440.6) rotate(-90)">3</text><text transform="translate(78.4 461.8) rotate(-90)">4</text><text transform="translate(78.4 483.0) rotate(-90)">5</text><text transform="translate(78.4 504.1) rotate(-90)">6</text><text transform="translate(78.4 525.3) rotate(-90)">7</text><text transform="translate(78.4 546.5) rotate(-90)">8</text><text transform="translate(78.4 567.6) rotate(-90)">9</text></g>
<path d="M206.3 106.4V119.4" stroke="#6a6a6a" stroke-width="1.1" fill="none"/><path d="M72.2 283.2H84" stroke="#8c8c8c" stroke-width="1.2" fill="none"/>
<path d="M207.6 315.4 V325.8 L210 323.6 L211.8 327.8 L213.8 326.9 L212 322.9 L215.2 322.9 Z" fill="#000" stroke="#f4f4f4" stroke-width=".9" stroke-linejoin="round"/>
</svg>
<div class="a" style="left:72.2px;top:630.7px;width:773px;height:34px;background:#e9e9e9;border-top:1.2px solid #d6d6d6"></div>
<div class="t" style="left:77.6px;top:639.4px;font-size:10.1px;font-weight:700;color:#414141;font-family:'Liberation Serif','Noto Serif CJK SC',serif">单击此处添加备注</div>
<!-- ===== format background panel ===== -->

<div class="a" style="left:845.2px;top:106.8px;width:234.8px;height:557.2px;background:#e9e9e9"></div>
<div class="a" style="left:845px;top:106.8px;width:1.2px;height:557.2px;background:#d2d2d2"></div>
<div class="t" style="left:860.2px;top:112.9px;font-size:11.9px;font-weight:700;color:#262626">设置背景格式</div>
<div class="a" style="left:1062.3px;top:111.9px;width:11px;height:11px;border-radius:50%;background:#5b5b5b"></div>
<svg style="left:1062px;top:111px" width="12" height="12" viewBox="1062 111 12 12"><path d="M1065.6 115.2 L1070 119.6 M1070 115.2 L1065.6 119.6" stroke="#f2f2f2" stroke-width="1.3" stroke-linecap="round" fill="none"/></svg>
<!-- tab -->
<div class="a" style="left:846.2px;top:167.6px;width:233.8px;height:1px;background:#dadada"></div>
<div class="a" style="left:846.2px;top:168.6px;width:233.8px;height:3px;background:#f3f3f3"></div>
<div class="a" style="left:855.4px;top:139.6px;width:30.8px;height:29px;border-radius:3px 3px 0 0;background:#f3f3f3;border:1px solid #dcdcdc;border-bottom:none"></div>
<svg style="left:860px;top:144px" width="24" height="22" viewBox="860 144 24 22" fill="none" stroke-linejoin="round" stroke-linecap="round">
 <path d="M863.6 155.2 L870.6 148.2 L876.4 154 L869.4 161 Z" fill="#fbfbfb" stroke="#4a4a4a" stroke-width="1.2"/>
 <path d="M870.2 151.6 V148 C870.2 146 872.6 146 872.6 148 V152.6" stroke="#8a8a8a" stroke-width="1.1"/>
 <path d="M874.4 151.8 C877.6 150.4 879.6 153 878.6 160.6 C878 157.6 877.8 155.6 876 154.2 Z" fill="#3a8fe0" stroke="#3a8fe0" stroke-width=".8"/>
</svg>
<!-- section header -->
<div class="a" style="left:846.2px;top:171.6px;width:233.8px;height:21px;background:linear-gradient(180deg,#e3e3e3,#dbdbdb)"></div>
<svg style="left:852px;top:178px" width="8" height="8" viewBox="852 178 8 8"><path d="M853 180.6 L856 183.6 L859 180.6" stroke="#6e6e6e" stroke-width="1.1" fill="none" stroke-linecap="round" stroke-linejoin="round"/></svg>
<div class="t" style="left:863.4px;top:177.8px;font-size:9.9px;font-weight:500;color:#2a2a2a">填充</div>
<!-- radios -->
<div class="rb" style="top:200.6px"></div>
<div class="rb" style="top:215.3px;background:#b9451d;box-shadow:0 0 0 .6px #a93d18"></div>
<div class="a" style="left:862.7px;top:218.4px;width:4.2px;height:4.2px;border-radius:50%;background:#fff"></div>
<div class="rb" style="top:230.3px"></div>
<div class="rb" style="top:245.3px"></div>
<div class="t pl" style="left:875px;top:201px">纯色填充</div>
<div class="t pl" style="left:875px;top:215.8px">渐变填充</div>
<div class="t pl" style="left:875px;top:230.7px">图片或纹理填充</div>
<div class="t pl" style="left:875px;top:245.7px">图案填充</div>
<div class="cb" style="top:262.7px"></div>
<div class="t pl" style="left:876px;top:264.4px">隐藏背景图形</div>
<div class="a" style="left:860px;top:278.4px;width:205px;height:1px;background:#dcdcdc"></div>
<!-- rows -->
<div class="t pl" style="left:860.3px;top:287px">预设渐变</div>
<div class="t pl" style="left:860.3px;top:310.6px">类型</div>
<div class="t pl" style="left:860.3px;top:334.2px">方向</div>
<div class="t pl" style="left:860.3px;top:357.2px">角度</div>
<div class="t pl" style="left:860.3px;top:380.8px">渐变光圈</div>
<div class="t pl" style="left:860.3px;top:442.6px">颜色</div>
<div class="t pl" style="left:860.3px;top:466.2px">位置</div>
<div class="t pl" style="left:860.3px;top:489.4px">透明度</div>
<div class="t pl" style="left:860.3px;top:512.8px">亮度</div>
<!-- preset gradient / direction buttons -->
<div class="gb" style="top:283.8px"></div>
<div class="a" style="left:1042.2px;top:286.8px;width:12.6px;height:12.4px;background:linear-gradient(135deg,#f4f9ff 0%,#cfe2fa 40%,#5a9ae8 100%)"></div>
<div class="gb" style="top:330.4px"></div>
<div class="a" style="left:1042.2px;top:333.4px;width:12.6px;height:12.4px;background:linear-gradient(135deg,#f4f9ff 0%,#cfe2fa 40%,#5a9ae8 100%)"></div>
<div class="gb" style="top:439.8px"></div>
<!-- type select -->
<div class="a" style="left:980.2px;top:307.4px;width:85.4px;height:18.2px;border-radius:3.5px;background:linear-gradient(180deg,#ececec,#e3e3e3);border:1px solid #c6c6c6"></div>
<div class="t" style="left:983.2px;top:313.5px;font-size:7.7px;color:#333;font-weight:500">线性</div>
<!-- inputs -->
<div class="inp" style="top:354px"><i></i></div><div class="iv" style="top:358.8px">90°</div>
<div class="inp" style="top:463.2px"><i></i></div><div class="iv" style="top:468px">0%</div>
<div class="inp" style="top:486.4px"><i></i></div><div class="iv" style="top:491.2px">0%</div>
<div class="inp" style="top:509.8px"><i></i></div><div class="iv" style="top:514.6px">95%</div>
<!-- plus minus -->
<div class="a" style="left:1028.8px;top:377.4px;width:36.4px;height:15.6px;border-radius:4.5px;background:#fff;box-shadow:0 .5px 1.5px rgba(0,0,0,.15)"></div>
<div class="a" style="left:1047px;top:380.4px;width:1px;height:9.4px;background:#e0e0e0"></div>
<!-- gradient bar -->
<div class="a" style="left:865.6px;top:398.4px;width:194.8px;height:24px;background:#f3f3f3;border:1px solid #d6d6d6"></div>
<div class="a" style="left:867.6px;top:400.4px;width:190.8px;height:20px;background:linear-gradient(90deg,#fafafa 0%,#f0f0f0 22%,#e3e3e3 45%,#d2d2d2 72%,#d1d1d1 84%,#dddddd 100%)"></div>
<!-- sliders -->
<div class="a" style="left:930px;top:492.4px;width:82px;height:1.8px;border-radius:1px;background:#d6d6d6"></div>
<div class="a" style="left:925.4px;top:488.3px;width:10.2px;height:10.2px;border-radius:50%;background:#fff;box-shadow:0 .5px 1.5px rgba(0,0,0,.25)"></div>
<div class="a" style="left:925.4px;top:515.4px;width:80px;height:2.2px;border-radius:1.1px;background:#b6451d"></div>
<div class="a" style="left:999.9px;top:511.4px;width:10.2px;height:10.2px;border-radius:50%;background:#fff;box-shadow:0 .5px 1.5px rgba(0,0,0,.25)"></div>
<!-- disabled checkbox -->
<div class="cb" style="top:536px;background:#f3f3f3;box-shadow:0 0 0 .6px #e2e2e2"></div>
<div class="t" style="left:876px;top:537.9px;font-size:9.5px;color:#c3c3c3">与形状一起旋转</div>
<!-- bottom buttons -->
<div class="a" style="left:903.4px;top:640.4px;width:54.6px;height:15.8px;border-radius:5px;background:#fff;box-shadow:0 .5px 1.2px rgba(0,0,0,.12)"></div>
<div class="t" style="left:912px;top:643.9px;font-size:9.5px;color:#2e2e2e;font-weight:500">全部应用</div>
<div class="a" style="left:967.6px;top:640.4px;width:54.6px;height:15.8px;border-radius:5px;background:#fff;box-shadow:0 .5px 1.2px rgba(0,0,0,.12)"></div>
<div class="t" style="left:975.8px;top:643.9px;font-size:9.5px;color:#2e2e2e;font-weight:500">重设背景</div>
<svg style="left:845px;top:280px" width="235" height="260" viewBox="845 280 235 260" fill="none" stroke-linejoin="round" stroke-linecap="round">
 <!-- dropdown arrows -->
 <g fill="#3c3c3c" stroke="none">
  <path d="M1058.6 291.6 H1062.2 L1060.4 294.4 Z"/>
  <path d="M1058.6 338.2 H1062.2 L1060.4 341 Z"/>
  <path d="M1058.6 447.6 H1062.2 L1060.4 450.4 Z"/>
  <path d="M1058.7 314.6 H1062.1 L1060.4 312 Z M1058.7 317.8 H1062.1 L1060.4 320.4 Z"/>
 </g>
 <g fill="#4a4a4a" stroke="none">
  <path d="M1058 361 H1061.4 L1059.7 358.4 Z M1058 365.8 H1061.4 L1059.7 368.4 Z"/>
  <path d="M1058 470.2 H1061.4 L1059.7 467.6 Z M1058 475 H1061.4 L1059.7 477.6 Z"/>
  <path d="M1058 493.4 H1061.4 L1059.7 490.8 Z M1058 498.2 H1061.4 L1059.7 500.8 Z"/>
  <path d="M1058 516.8 H1061.4 L1059.7 514.2 Z M1058 521.6 H1061.4 L1059.7 524.2 Z"/>
 </g>
 <!-- plus / minus -->
 <path d="M1033.8 385.2 H1042 M1037.9 381.2 V389.2 M1052.8 385.2 H1060.4" stroke="#3a3a3a" stroke-width="1.1"/>
 <!-- gradient stops -->
 <path d="M861.6 420.6 L867.4 415.6 L873.2 420.6 V431.6 H861.6 Z" fill="#f9f9f9" stroke="#ec9a62" stroke-width="1.3"/>
 <g fill="#fdfdfd" stroke="#cdcdcd" stroke-width=".8">
  <path d="M1003 421.4 L1008.6 416.6 L1014.2 421.4 V431.8 H1003 Z"/>
  <path d="M1020.4 421.4 L1026 416.6 L1031.6 421.4 V431.8 H1020.4 Z"/>
  <path d="M1052.6 421.4 L1058.2 416.6 L1063.8 421.4 V431.8 H1052.6 Z"/>
 </g>
 <g stroke="none">
  <rect x="1005.4" y="422.8" width="6.4" height="6.4" fill="#d0d0d0"/>
  <rect x="1022.8" y="422.8" width="6.4" height="6.4" fill="#d0d0d0"/>
  <rect x="1055" y="422.8" width="6.4" height="6.4" fill="#dedede"/>
 </g>
 <!-- color bucket -->
 <path d="M1044.4 446.6 L1047.8 443.2 L1051.6 447 L1048.2 450.4 Z" fill="#fbfbfb" stroke="#5a5a5a" stroke-width=".9"/>
 <path d="M1048.4 444.6 C1048 442.4 1049.2 441.6 1049.6 443.6" stroke="#5a5a5a" stroke-width=".8"/>
 <path d="M1047.2 444.4 L1051.4 448.6 M1049.6 444.8 C1051.8 445.4 1052.6 447.2 1052.2 450" stroke="#2f86de" stroke-width="1.2"/>
 <rect x="1042" y="453.2" width="12.8" height="2.2" fill="#f6f6f6" stroke="none"/>
</svg>
<!-- ===== status bar ===== -->
<div class="a" style="left:0;top:663.6px;width:1080px;height:18px;background:linear-gradient(180deg,#e2e2e2,#d8d8d8);border-top:1px solid #c2c2c2"></div>
<div class="a" style="left:0;top:680.6px;width:1080px;height:1.4px;background:linear-gradient(180deg,#8a8a8a,#4a4a4a)"></div>
<div class="a" style="left:779px;top:664.4px;width:28.8px;height:16.4px;background:#9f9f9f"></div>
<div class="t" style="left:21.6px;top:668.8px;font-size:9.4px;color:#555;letter-spacing:0;word-spacing:-.4px;-webkit-text-stroke:.2px #555">幻灯片 1 / 1</div>
<div class="t" style="left:85.6px;top:668.8px;font-size:9.4px;color:#555;letter-spacing:0;word-spacing:-.6px;-webkit-text-stroke:.2px #555">中文 (中国)</div>
<div class="t" style="left:704.4px;top:668.6px;font-size:9px;color:#555;-webkit-text-stroke:.2px #555">备注</div>
<div class="t" style="left:752.4px;top:668.6px;font-size:9px;color:#555;-webkit-text-stroke:.2px #555">批注</div>
<div class="t" style="left:1013.8px;top:668.4px;font-size:9.6px;color:#6c6c6c;letter-spacing:.35px;-webkit-text-stroke:.3px #6c6c6c">96%</div>
<svg style="left:680px;top:664px" width="400" height="17" viewBox="680 664 400 17" fill="none" stroke-linecap="round" stroke-linejoin="round">
 <!-- notes icon -->
 <path d="M690.6 670.8 H700 M690.6 673 H700 M690.6 675.2 H700 M690.6 677.2 H695.6" stroke="#6a6a6a" stroke-width=".9"/>
 <path d="M693.6 669.2 L695.4 667.6 L697.2 669.2 Z" fill="#6a6a6a" stroke="#6a6a6a" stroke-width=".6"/>
 <!-- comment -->
 <path d="M738.8 669 H748.6 V675.2 H743.2 L741.4 677 V675.2 H738.8 Z" fill="#5a5a5a" stroke="#5a5a5a" stroke-width=".8"/>
 <!-- normal view (selected) -->
 <rect x="788.4" y="667.8" width="10.4" height="9.6" fill="#fff" stroke="#fff" stroke-width=".6"/>
 <rect x="791.6" y="669.4" width="5.8" height="4.4" fill="#b5b5b5" stroke="none"/>
 <path d="M793 671.4 H796 M791.8 675.8 H797.4" stroke="#fff" stroke-width=".8"/>
 <path d="M791.8 675.6 H797.6" stroke="#a9a9a9" stroke-width=".8"/>
 <!-- grid -->
 <g fill="#6a6a6a" stroke="none">
  <rect x="815.6" y="668.6" width="4.6" height="3.2" rx=".6"/><rect x="822.6" y="668.6" width="4.6" height="3.2" rx=".6"/>
  <rect x="815.6" y="674" width="4.6" height="3.2" rx=".6"/><rect x="822.6" y="674" width="4.6" height="3.2" rx=".6"/>
 </g>
 <!-- reading -->
 <path d="M849.6 669.2 C847.6 668 845.6 668 843.8 668.4 V676.8 C845.6 676.4 847.6 676.4 849.6 677.4 C851.6 676.4 853.6 676.4 855.6 676.8 V668.4 C853.6 668 851.6 668 849.6 669.2 Z M849.6 669.2 V677.4" stroke="#7a7a7a" stroke-width=".9"/>
 <path d="M845.4 670.6 H848 M845.4 672.4 H848 M845.4 674.2 H848 M851.2 670.6 H853.8 M851.2 672.4 H853.8 M851.2 674.2 H853.8" stroke="#9a9a9a" stroke-width=".7"/>
 <!-- slideshow -->
 <path d="M872 668.8 H883.4" stroke="#6a6a6a" stroke-width="1.2"/>
 <path d="M873 669.4 V675 H882.4 V669.4 M877.7 675 V677.4 M875.6 677.6 H879.8" stroke="#6a6a6a" stroke-width=".9"/>
 <rect x="874.8" y="670.8" width="5.8" height="2" fill="#b9b9b9" stroke="none"/>
 <!-- zoom -->
 <path d="M898.4 673 H903.4" stroke="#5e5e5e" stroke-width="1.5" stroke-linecap="butt"/>
 <path d="M910.6 673 H985.4" stroke="#8e8e8e" stroke-width="2.6"/>
 <circle cx="946.4" cy="673" r="6" fill="#fff" stroke="rgba(0,0,0,.14)" stroke-width=".6"/>
 <path d="M992.6 673 H998.6 M995.6 670 V676" stroke="#5a5a5a" stroke-width="1.5" stroke-linecap="butt"/>
 <!-- fit -->
 <rect x="1051" y="667.8" width="10" height="10" rx="1" fill="#8a8a8a" stroke="none"/>
 <g fill="#dedede" stroke="none">
  <rect x="1052.2" y="669" width="3" height="3"/><rect x="1056.8" y="669" width="3" height="3"/>
  <rect x="1052.2" y="673.6" width="3" height="3"/><rect x="1056.8" y="673.6" width="3" height="3"/>
  <rect x="1055" y="671.8" width="2" height="2" fill="#d2d2d2"/>
 </g>
</svg>
</div>
</body>
</html>
